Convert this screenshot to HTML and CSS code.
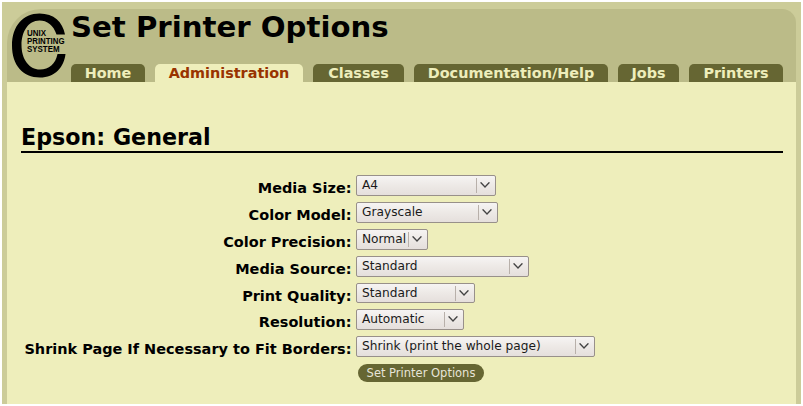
FILE: index.html
```html
<!DOCTYPE html>
<html lang="en">
<head>
<meta charset="utf-8">
<title>Set Printer Options</title>
<link rel="stylesheet" href="styles.css">
</head>
<body>
<div class="page">
  <header class="header">
    <svg class="logo" viewBox="0 0 56 66" width="56" height="66">
      <path d="M54 22.500H45.500C42.500 13 36 8.500 28.500 8.500C17 8.500 10.500 20 10.500 33C10.500 47 18 57.500 29 57.500C38 57.500 44.500 52 46.500 42H54.500C53 55 44 65.500 29 65.500C11.500 65.500 1 53 1 33.500C1 14 12 1.500 28.500 1.500C43 1.500 51.500 10 54 22.500Z"/>
      <text x="16" y="24" textLength="19" lengthAdjust="spacingAndGlyphs">UNIX</text>
      <text x="16" y="31.700" textLength="37.500" lengthAdjust="spacingAndGlyphs">PRINTING</text>
      <text x="16" y="39.600" textLength="32.500" lengthAdjust="spacingAndGlyphs">SYSTEM</text>
    </svg>
    <div class="banner">
      <h1><span>Set Printer Options</span></h1>
      <nav class="tabs">
        <a class="tab home">Home</a>
        <a class="tab admin active">Administration</a>
        <a class="tab classes">Classes</a>
        <a class="tab help">Documentation/Help</a>
        <a class="tab jobs">Jobs</a>
        <a class="tab printers">Printers</a>
      </nav>
    </div>
  </header>
  <main class="content">
    <h2>Epson: General</h2>
    <form class="options">
      <label>Media Size:</label><div class="select w-size">A4<i></i></div>
      <label>Color Model:</label><div class="select w-model">Grayscale<i></i></div>
      <label>Color Precision:</label><div class="select w-precision">Normal<i></i></div>
      <label>Media Source:</label><div class="select w-source">Standard<i></i></div>
      <label>Print Quality:</label><div class="select w-quality">Standard<i></i></div>
      <label>Resolution:</label><div class="select w-resolution">Automatic<i></i></div>
      <label>Shrink Page If Necessary to Fit Borders:</label><div class="select w-shrink">Shrink (print the whole page)<i></i></div>
      <button type="button" class="submit">Set Printer Options</button>
    </form>
  </main>
</div>
</body>
</html>
```
FILE: styles.css
```css
* { box-sizing: border-box; }
body {
  margin: 0;
  padding: 2px;
  background: #fff;
  color: #000;
  font-family: "DejaVu Sans", sans-serif;
}
.page {
  height: 402px;
  padding: 7px 5px 0;
  background: #cccc99;
}
.header {
  display: flex;
  height: 73px;
  background: #bbbb88;
  border-radius: 34px 14px 0 0;
}
.logo {
  flex: none;
  margin: 3px 4px 0;
}
.logo text {
  font: bold 8.300px "Liberation Sans", sans-serif;
}
.banner {
  display: flex;
  flex-direction: column;
  justify-content: space-between;
}
h1 {
  margin: 0;
  font-size: 29.200px;
  line-height: 36px;
  white-space: nowrap;
}
.tabs {
  display: flex;
  gap: 10px;
}
.tab {
  height: 18px;
  border-radius: 5px 5px 0 0;
  background: #666633;
  color: #eeeebb;
  font-size: 14.400px;
  font-weight: bold;
  line-height: 18px;
  text-align: center;
  white-space: nowrap;
}
.active { background: #eeeebb; color: #993300; }
.home { width: 74px; }
.admin { width: 148px; }
.classes { width: 91px; }
.help { width: 194px; }
.jobs { width: 61px; }
.printers { width: 94px; }
.content {
  height: 322px;
  padding: 40px 13px 0 14px;
  background: #eeeebb;
}
h2 {
  height: 31px;
  margin: 0 0 22px;
  border-bottom: 2px solid #000;
  font-size: 22.200px;
  line-height: 30px;
}
.options {
  display: grid;
  grid-template-columns: 331px 1fr;
  grid-template-rows: 27px 27px 27px 27px 26px 27px 28px 18px;
  column-gap: 4px;
}
label {
  padding: 3px 0.500px 0 0;
  font-size: 14.480px;
  font-weight: bold;
  line-height: 20px;
  text-align: right;
  white-space: nowrap;
}
.select {
  display: flex;
  justify-content: space-between;
  height: 21px;
  padding: 0 0 0 5px;
  border: 1px solid #98908a;
  border-radius: 2px;
  background: linear-gradient(#f6f4f3, #ede9e6 50%, #e5dfdc);
  color: #1a1a1a;
  font-size: 12.200px;
  line-height: 19px;
  white-space: nowrap;
}
.select i {
  flex: none;
  width: 19px;
  height: 15px;
  margin-top: 2px;
  border-left: 1px solid #b8b0aa;
}
.select i::before {
  content: "";
  display: block;
  width: 10px;
  height: 6px;
  margin: 4px 0 0 3px;
  background: #444;
  clip-path: polygon(0 13%, 12% 0, 50% 65%, 88% 0, 100% 13%, 50% 100%);
}
.w-size { width: 140px; }
.w-model { width: 142px; }
.w-precision { width: 72px; }
.w-source { width: 173px; }
.w-quality { width: 119px; height: 20px; }
.w-resolution { width: 108px; }
.w-shrink { width: 239px; }
.submit {
  grid-column: 2;
  width: 126px;
  height: 18px;
  margin-left: 2px;
  padding: 0;
  border: 0;
  border-radius: 9px;
  background: #666633;
  color: #e6e4d8;
  font: 11.500px/18px "DejaVu Sans", sans-serif;
}
```
